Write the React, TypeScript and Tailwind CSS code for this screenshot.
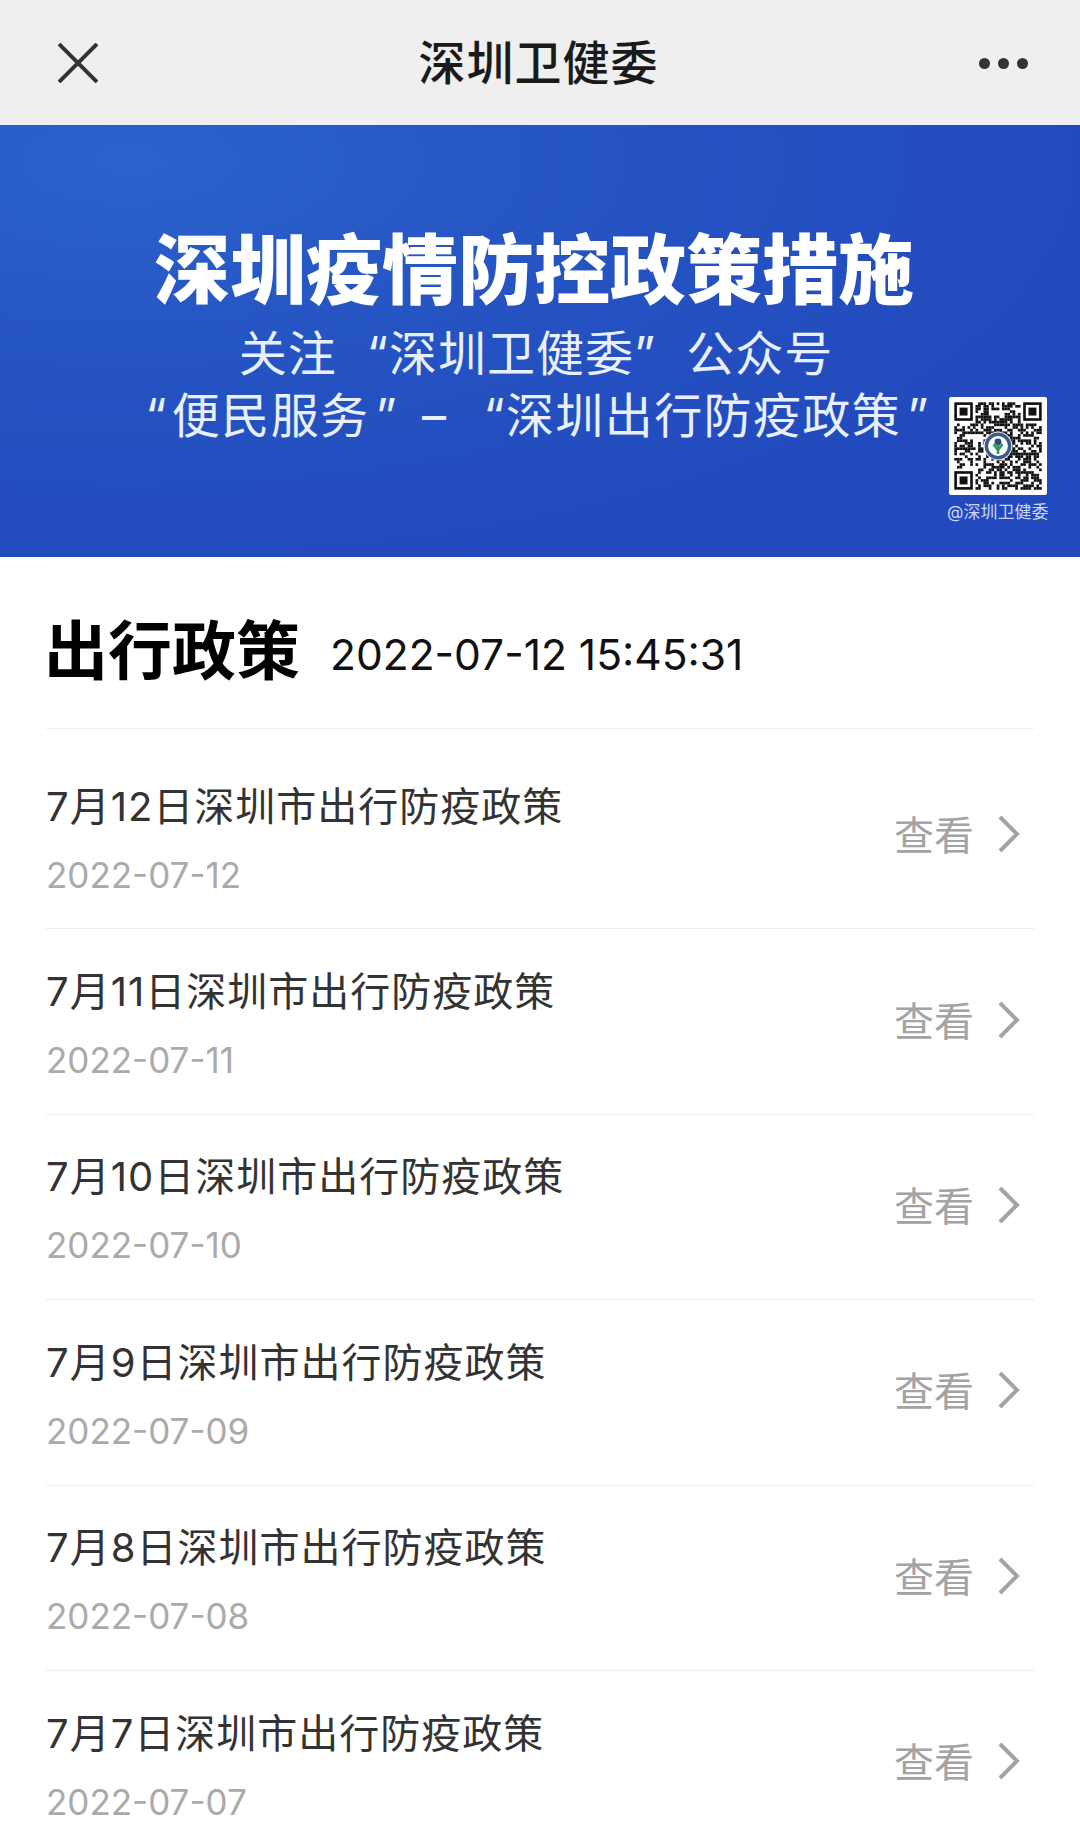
import React from "react";

const font = "font-['Inter','Noto_Sans_CJK_SC',sans-serif]";

const policies = [
  { title: "7月12日深圳市出行防疫政策", date: "2022-07-12" },
  { title: "7月11日深圳市出行防疫政策", date: "2022-07-11" },
  { title: "7月10日深圳市出行防疫政策", date: "2022-07-10" },
  { title: "7月9日深圳市出行防疫政策", date: "2022-07-09" },
  { title: "7月8日深圳市出行防疫政策", date: "2022-07-08" },
  { title: "7月7日深圳市出行防疫政策", date: "2022-07-07" },
];

const SIZE = 33;

function isFinder(x: number, y: number) {
  return (x < 8 && y < 8) || (x >= SIZE - 8 && y < 8) || (x < 8 && y >= SIZE - 8);
}

// filler modules, the code itself is not readable in the picture
function moduleOn(x: number, y: number) {
  const n = Math.sin(x * 12.9898 + y * 78.233) * 43758.5453;
  return n - Math.floor(n) > 0.5;
}

function Finder({ x, y }: { x: number; y: number }) {
  return (
    <g>
      <rect x={x} y={y} width="7" height="7" fill="#111" />
      <rect x={x + 1} y={y + 1} width="5" height="5" fill="#fff" />
      <rect x={x + 2} y={y + 2} width="3" height="3" fill="#111" />
    </g>
  );
}

function QrCode() {
  const cells: React.ReactNode[] = [];
  for (let y = 0; y < SIZE; y++) {
    for (let x = 0; x < SIZE; x++) {
      if (!isFinder(x, y) && moduleOn(x, y)) {
        cells.push(<rect key={`${x}-${y}`} x={x} y={y} width="1.02" height="1.02" fill="#111" />);
      }
    }
  }
  return (
    <svg viewBox="-2 -2 37 37" className="w-[98px] h-[98px] rounded-[2px] bg-white">
      {cells}
      <Finder x={0} y={0} />
      <Finder x={SIZE - 7} y={0} />
      <Finder x={0} y={SIZE - 7} />
      <circle cx="16.5" cy="16.5" r="5.4" fill="#fff" />
      <circle cx="16.5" cy="16.5" r="4.4" fill="none" stroke="#3d5a8c" strokeWidth="1.3" />
      <circle cx="16.5" cy="15" r="1.3" fill="#2b4a80" />
      <path d="M16.5 16v3.5M14.8 15.8l1.7 2.2 1.7-2.2" fill="none" stroke="#2f9a5a" strokeWidth="1" />
    </svg>
  );
}

function PolicyRow({ title, date }: { title: string; date: string }) {
  return (
    <div className="h-[185.4px] flex items-center justify-between border-b border-[#ececec]">
      <div className="mt-[7px]">
        <div className="text-[40px] leading-[48px] text-[#333] tracking-[1px]">{title}</div>
        <div className="mt-[22px] text-[35px] leading-[44px] text-[#aaa]">{date}</div>
      </div>
      <div className="flex items-center gap-[24px] pr-[14px]">
        <span className="text-[40px] leading-[48px] text-[#a3a3a3]">查看</span>
        <svg viewBox="0 0 22 38" className="w-[22px] h-[38px] -mt-[4px]" fill="none" stroke="#a3a3a3" strokeWidth="4">
          <path d="M2 2 19 19 2 36" />
        </svg>
      </div>
    </div>
  );
}

export default function App() {
  return (
    <div className={`w-[1080px] h-[1845px] overflow-hidden bg-white ${font}`}>
      <header className="h-[125px] bg-[#efefef] flex items-center justify-between pl-[58px] pr-[52px]">
        <svg viewBox="0 0 40 40" className="w-[40px] h-[40px]" fill="none" stroke="#333" strokeWidth="4">
          <path d="M1 1 39 39M39 1 1 39" />
        </svg>
        <h1 className="text-[47px] leading-[56px] font-medium text-[#1a1a1a] tracking-[1px]">深圳卫健委</h1>
        <div className="flex gap-[8px] mt-[2px]">
          <span className="w-[11px] h-[11px] rounded-full bg-[#333]" />
          <span className="w-[11px] h-[11px] rounded-full bg-[#333]" />
          <span className="w-[11px] h-[11px] rounded-full bg-[#333]" />
        </div>
      </header>

      <section className="relative h-[432px] bg-[radial-gradient(ellipse_at_12%_8%,#2b62cc_0%,#2553c2_38%,#2249bd_78%)] text-center pt-[101px]">
        <h2 className="pr-[12px] text-[76px] leading-[88px] font-black text-white">深圳疫情防控政策措施</h2>
        <p className="mt-[9px] pr-[8px] text-[48px] leading-[62px] text-[#e8f0ff] tracking-[1px]">
          关注<span className="ml-[30px]">“</span>深圳卫健委<span className="mr-[30px]">”</span>公众号
        </p>
        <p className="pr-[7px] text-[48px] leading-[62px] text-[#e8f0ff] tracking-[1.4px]">
          <span className="ml-[26px] mr-[4px]">“</span>便民服务<span className="ml-[6px] mr-[24px]">”</span>–<span className="ml-[36px]">“</span>深圳出行防疫政策<span className="ml-[6px] mr-[24px]">”</span>
        </p>
        <div className="absolute left-[947px] top-[272px] flex flex-col items-center">
          <QrCode />
          <span className="mt-[7px] text-[17px] leading-[20px] text-[#c8d8f8] whitespace-nowrap">@深圳卫健委</span>
        </div>
      </section>

      <main className="px-[46px]">
        <div className="h-[172px] pt-[17px] flex items-center gap-[30px] border-b border-[#f0f0f0]">
          <h3 className="-ml-[2px] text-[64px] leading-[72px] font-bold text-black">出行政策</h3>
          <span className="pt-[8px] text-[42.5px] leading-[50px] text-[#111]">2022-07-12 15:45:31</span>
        </div>
        <div className="pt-[15px]">
          {policies.map((p) => (
            <PolicyRow key={p.date} title={p.title} date={p.date} />
          ))}
        </div>
      </main>
    </div>
  );
}
